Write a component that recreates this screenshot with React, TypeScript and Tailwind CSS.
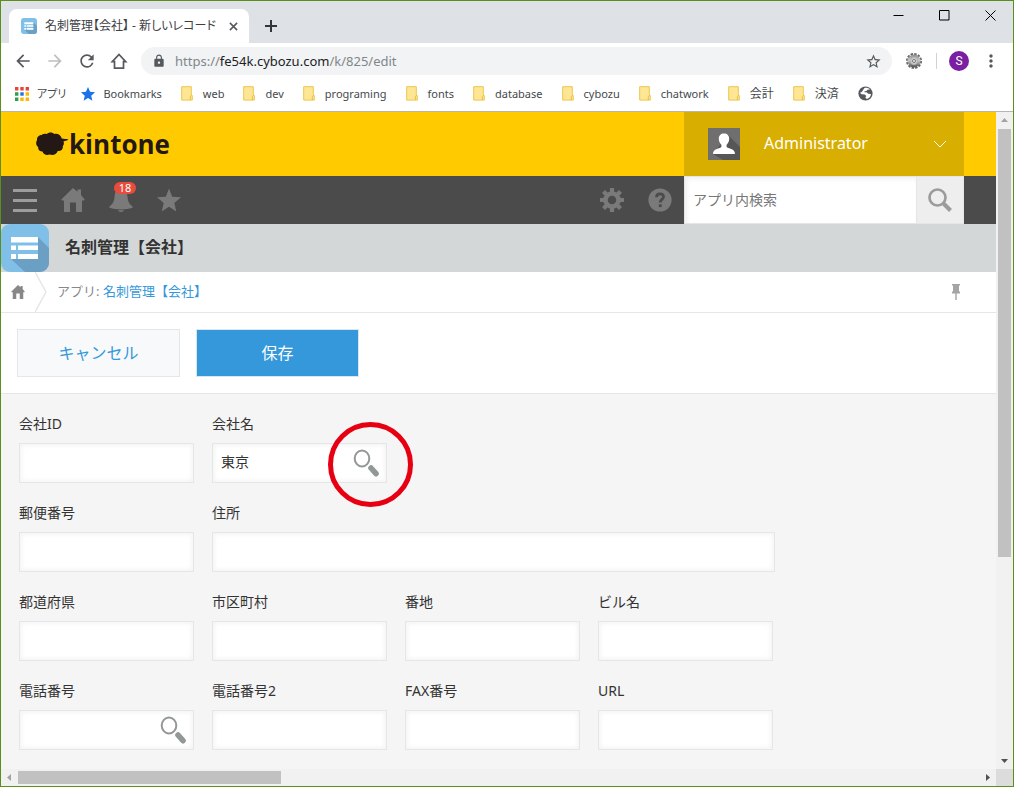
import React from 'react';
import { MdArrowBack, MdArrowForward, MdLock, MdMoreVert, MdRefresh, MdStarBorder } from 'react-icons/md';

const bookmarks = ['web', 'dev', 'programing', 'fonts', 'database', 'cybozu', 'chatwork'];
const japaneseBookmarks = ['会計', '決済'];

type Field = { id: string; label: string; value?: string; lookup?: boolean; wide?: boolean; marked?: boolean };

const rows: Field[][] = [
  [
    { id: 'company-id', label: '会社ID' },
    { id: 'company-name', label: '会社名', value: '東京', lookup: true, marked: true },
  ],
  [
    { id: 'zip', label: '郵便番号' },
    { id: 'address', label: '住所', wide: true },
  ],
  [
    { id: 'prefecture', label: '都道府県' },
    { id: 'city', label: '市区町村' },
    { id: 'street', label: '番地' },
    { id: 'building', label: 'ビル名' },
  ],
  [
    { id: 'tel', label: '電話番号', lookup: true },
    { id: 'tel2', label: '電話番号2' },
    { id: 'fax', label: 'FAX番号' },
    { id: 'url', label: 'URL' },
  ],
];

function AppIcon({ className }: { className: string }) {
  return (
    <svg viewBox="0 0 48 48" className={className} aria-hidden="true">
      <rect width="48" height="48" rx="9" fill="#7fbfe8" />
      <path d="M37 13 48 24v15a9 9 0 0 1-9 9H24L10 35h27z" fill="#6c9fc4" />
      <path d="M10 13h27v5.500H10zM10 21.500h5V26h-5zM17 21.500h20V26H17zM10 30h5v5h-5zM17 30h20v5H17z" fill="#fff" />
    </svg>
  );
}

function Folder() {
  return (
    <svg viewBox="0 0 12 15" className="h-[15px] w-3 shrink-0" aria-hidden="true">
      <path d="M.7.700h9.600V9.500h1v4.600H.7z" fill="#ffe694" stroke="#ecc64f" />
      <path d="M9.300 14v-3.200l1-1.300" fill="none" stroke="#e8be3c" />
    </svg>
  );
}

function House({ className }: { className: string }) {
  return (
    <svg viewBox="0 0 24 24" className={className} fill="currentColor" aria-hidden="true">
      <path d="M12 0 .300 11.500 1 12.500h2V24h6v-9.500h6V24h6V12.500h2l.700-1L20 7V1.500h-3.500v2.300z" />
    </svg>
  );
}

function Lookup() {
  return (
    <svg viewBox="0 0 26 28" className="h-7 w-[26px]" aria-hidden="true">
      <ellipse cx="9" cy="9.500" rx="7.300" ry="8" fill="#fff" stroke="#929896" strokeWidth="2" />
      <path d="m18 19 5 5.700" stroke="#929896" strokeWidth="5.600" strokeLinecap="round" />
    </svg>
  );
}

function Browser() {
  return (
    <header className="bg-white font-['Noto_Sans','Noto_Sans_CJK_JP',sans-serif]">
      <div className="flex h-[42px] bg-[#dee1e6] pl-2">
        <div className="mt-2 flex w-60 items-center rounded-t-lg bg-white pl-3 pr-2">
          <AppIcon className="size-4 shrink-0" />
          <span className="ml-2 flex-1 whitespace-nowrap text-[12px] leading-4 text-[#3c4043] [font-feature-settings:'palt']">
            名刺管理【会社】 - 新しいレコード
          </span>
          <button aria-label="タブを閉じる" className="flex size-4 items-center justify-center">
            <svg viewBox="0 0 10 10" className="size-[9px]" stroke="#55585c" strokeWidth="1.700">
              <path d="m1 1 8 8M9 1 1 9" />
            </svg>
          </button>
        </div>
        <button aria-label="新しいタブ" className="ml-4 mt-[19px] size-3">
          <svg viewBox="0 0 12 12" className="size-3" stroke="#333639" strokeWidth="2">
            <path d="M6 0v12M0 6h12" />
          </svg>
        </button>
        <div className="ml-auto flex h-7">
          <button aria-label="最小化" className="flex w-[46px] items-center justify-center">
            <svg viewBox="0 0 11 11" className="size-[11px]" fill="none" stroke="#000"><path d="M.500 5.500h10" /></svg>
          </button>
          <button aria-label="最大化" className="flex w-[46px] items-center justify-center">
            <svg viewBox="0 0 11 11" className="size-[11px]" fill="none" stroke="#000"><path d="M.500.500h9.500v9.500H.500z" /></svg>
          </button>
          <button aria-label="閉じる" className="flex w-[46px] items-center justify-center">
            <svg viewBox="0 0 11 11" className="size-[11px]" fill="none" stroke="#000"><path d="m.500.500 10 10M10.500.500l-10 10" /></svg>
          </button>
        </div>
      </div>
      <div className="flex h-9 items-center pl-3 pr-3 text-[#55585c]">
        <div className="flex gap-3">
          <button aria-label="戻る"><MdArrowBack size={20} /></button>
          <button aria-label="進む" className="text-[#bcbec0]"><MdArrowForward size={20} /></button>
          <button aria-label="再読み込み"><MdRefresh size={20} /></button>
          <button aria-label="ホーム">
            <svg viewBox="0 0 20 20" className="size-5" fill="none" stroke="currentColor" strokeWidth="1.700">
              <path d="M3.300 10.700 10 3.500l6.700 7.200h-2.200v6.500h-9v-6.500z" />
            </svg>
          </button>
        </div>
        <div className="ml-3 flex h-7 flex-1 items-center rounded-full bg-[#f1f3f4] pl-[11px] pr-[10px]">
          <MdLock size={14} />
          <div
            role="textbox"
            aria-label="アドレス"
            contentEditable
            suppressContentEditableWarning
            className="ml-[9px] flex-1 whitespace-nowrap text-[13px] leading-5 text-[#80868b] outline-none"
          >
            https://<span className="text-[#202124]">fe54k.cybozu.com</span>/k/825/edit
          </div>
          <button aria-label="ブックマークに追加"><MdStarBorder size={17} /></button>
        </div>
        <button aria-label="拡張機能" className="ml-[14px]">
          <svg viewBox="0 0 16 16" className="size-4">
            <defs>
              <linearGradient id="metal" x1="0" y1="0" x2="0" y2="1">
                <stop offset="0" stopColor="#8a8a8a" />
                <stop offset=".45" stopColor="#c9c9c9" />
                <stop offset="1" stopColor="#4d4d4d" />
              </linearGradient>
            </defs>
            <circle cx="8" cy="8" r="7" fill="none" stroke="#666" strokeWidth="2" strokeDasharray="2.400 1.265" />
            <circle cx="8" cy="8" r="6.500" fill="url(#metal)" />
            <circle cx="8" cy="8" r="3.500" fill="#cfcfcf" stroke="#b5b5b5" />
            <circle cx="8" cy="8" r="1.500" fill="#f5f5f5" stroke="#777" />
          </svg>
        </button>
        <span className="ml-[14px] h-4 w-px bg-[#d0d2d5]" />
        <button aria-label="プロフィール" className="ml-3 size-5 rounded-full bg-[#7b1fa2] text-center font-['Roboto',sans-serif] text-[12px] leading-5 text-white">S</button>
        <button aria-label="メニュー" className="ml-3"><MdMoreVert size={20} /></button>
      </div>
      <nav className="flex h-8 items-center gap-[19px] whitespace-nowrap pb-[3px] pl-[14px] text-[11px] leading-4 text-[#45494d]">
        <a href="#apps" className="flex items-center gap-2 [font-feature-settings:'palt']">
          <svg viewBox="0 0 14 14" className="size-[14px]">
            <path d="M0 0h3.400v3.400H0zM5.300 0h3.400v3.400H5.300zM10.600 0H14v3.400h-3.400z" fill="#ea4335" />
            <path d="M0 5.300h3.400v3.400H0zM0 10.600h3.400V14H0z" fill="#2f9e4f" />
            <path d="M5.300 5.300h3.400v3.400H5.300z" fill="#1a73e8" />
            <path d="M10.600 5.300H14v3.400h-3.400zM5.300 10.600h3.400V14H5.300zM10.600 10.600H14V14h-3.400z" fill="#fbb904" />
          </svg>
          アプリ
        </a>
        <a href="#bookmarks" className="-ml-1 flex items-center gap-2">
          <svg viewBox="0 0 24 24" className="size-[14px]" fill="#1a73e8">
            <path d="m12 0 3.500 8.300 8.500.700-6.500 6 2 8.500L12 19l-7.500 4.500 2-8.500L0 9l8.500-.700z" />
          </svg>
          Bookmarks
        </a>
        {bookmarks.map((name) => (
          <a key={name} href={`#${name}`} className="flex items-center gap-[10px]">
            <Folder />
            {name}
          </a>
        ))}
        {japaneseBookmarks.map((name) => (
          <a key={name} href={`#${name}`} className="flex items-center gap-[10px] text-[12px]">
            <Folder />
            {name}
          </a>
        ))}
        <a href="#globe" aria-label="サイト">
          <svg viewBox="0 0 15 15" className="size-[15px]">
            <circle cx="7.500" cy="7.500" r="7.100" fill="#55585c" />
            <path d="M6.200 2.200c1.600-.700 4.400-.300 5.700 1.200l-2.500.300-.900 1.300-1.900.200-.200 1 2.200.100 1.700 1.500 2.700.200c-.100 2.400-1.800 4.400-4.200 5L7.300 11.500l1-1.400-1.600-1.600-3-.200-1.900-1.600c1.600-.200 2.500-1 3-2.200z" fill="#fff" />
          </svg>
        </a>
      </nav>
    </header>
  );
}

function Account() {
  return (
    <button className="mr-8 flex w-[280px] items-center bg-[#d8ae00] pl-6 pr-4 text-white">
      <svg viewBox="0 0 32 32" className="size-8" aria-hidden="true">
        <path d="M0 0h32v32H0z" fill="#6f6f6f" />
        <path d="M20 7 32 19v13H15L5 26z" fill="#565656" />
        <path d="M16 5.500c3.200 0 5.200 2 5.200 5.200 0 2.600-1 4.300-2.200 5.600-.700.800-.700 2.700.200 3.300 3.300 1.400 7.800 2 7.800 6.400H5c0-4.400 4.500-5 7.800-6.400.900-.600.900-2.500.200-3.300-1.200-1.300-2.200-3-2.200-5.600 0-3.200 2-5.200 5.200-5.200z" fill="#fff" />
      </svg>
      <span className="ml-6 pb-0.5 text-[16px] leading-6">Administrator</span>
      <svg viewBox="0 0 14 8" className="ml-auto mr-px h-2 w-[14px]" fill="none" stroke="#fff" aria-hidden="true">
        <path d="m1 1 6 6 6-6" />
      </svg>
    </button>
  );
}

function GlobalNav() {
  return (
    <nav className="flex h-12 items-center bg-[#4b4b4b] pl-3 text-[#7a7a7a]">
      <div className="flex items-center gap-6">
        <button aria-label="メニュー">
          <svg viewBox="0 0 24 24" className="size-6" fill="#9d9d9d"><path d="M0 1h24v3H0zM0 11h24v3H0zM0 21h24v3H0z" /></svg>
        </button>
        <button aria-label="ポータル"><House className="size-6" /></button>
        <button aria-label="通知 18" className="relative">
          <svg viewBox="0 0 24 24" className="size-6" fill="currentColor">
            <path d="M12 0c4 0 5.800 3 6.300 7.500.6 6 1.700 8.500 5.200 11 .5.600.3 1-.3 1.300-5.500 2.200-16.900 2.200-22.400 0-.6-.3-.8-.7-.3-1.300C4 16 5.100 13.500 5.700 7.500 6.200 3 8 0 12 0zM9 22.300h6c-.600 2.200-5.400 2.200-6 0z" />
          </svg>
          <span className="absolute -top-[6px] left-[5px] h-3 w-[22px] rounded-full bg-[#e74c3c] text-[11px] leading-3 text-white">18</span>
        </button>
        <button aria-label="ブックマーク">
          <svg viewBox="0 0 24 24" className="size-6" fill="currentColor">
            <path d="m12 .500 3.200 8.300 8.800.500-6.700 5.600 2 8.700L12 18.700l-7.300 4.900 2-8.700L0 9.300l8.800-.500z" />
          </svg>
        </button>
      </div>
      <div className="ml-auto flex items-center gap-6 pr-3">
        <button aria-label="設定">
          <svg viewBox="0 0 24 24" className="size-6" fill="none" stroke="currentColor">
            <circle cx="12" cy="12" r="6.500" strokeWidth="4.500" />
            <path d="M12 0v4M12 20v4M0 12h4M20 12h4M3.500 3.500l3 3M17.500 17.500l3 3M3.500 20.500l3-3M17.500 6.500l3-3" strokeWidth="4.200" />
          </svg>
        </button>
        <button aria-label="ヘルプ">
          <svg viewBox="0 0 24 24" className="size-6">
            <circle cx="12" cy="12" r="11.600" fill="currentColor" />
            <path d="M8.500 9.300C8.600 4.500 15.800 5 15.500 9c-.200 2.500-3.300 2.400-3.300 5.500" fill="none" stroke="#4b4b4b" strokeWidth="2.800" />
            <path d="M10.800 16.300h2.900v2.800h-2.900z" fill="#4b4b4b" />
          </svg>
        </button>
      </div>
      <form className="mr-8 flex h-12 w-[280px] border border-[#e3e7e8] bg-white" onSubmit={(e) => e.preventDefault()}>
        <input aria-label="アプリ内検索" placeholder="アプリ内検索" className="min-w-0 flex-1 px-2 pb-0.5 text-[14px] shadow-[inset_2px_2px_4px_#f0f0f0] outline-none placeholder:text-[#777]" />
        <button aria-label="検索" className="flex w-[47px] items-center justify-center border-l border-[#e3e7e8] bg-[#eee]">
          <svg viewBox="0 0 24 24" className="size-6" fill="none" stroke="#9b9b9b">
            <circle cx="9.500" cy="9.500" r="8" strokeWidth="2.700" />
            <path d="m15.500 15.500 7 7" strokeWidth="4" />
          </svg>
        </button>
      </form>
    </nav>
  );
}

function FieldBox({ field }: { field: Field }) {
  return (
    <div className={field.wide ? 'w-[563px]' : 'w-[175px]'}>
      <label htmlFor={field.id} className="block text-[14px] leading-5">{field.label}</label>
      <div className="relative mt-[9px]">
        <input
          id={field.id}
          defaultValue={field.value}
          className="block h-10 w-full border border-[#e3e7e8] bg-white px-2 pb-1 text-[14px] shadow-[inset_2px_2px_4px_#f5f5f5,inset_-2px_-2px_4px_#f5f5f5] outline-none"
        />
        {field.lookup && (
          <button aria-label={`${field.label}を検索`} className="absolute right-2 top-[6px]"><Lookup /></button>
        )}
        {field.marked && (
          <span className="pointer-events-none absolute -top-[21px] left-[116px] size-[85px] rounded-full border-[5px] border-[#e60012]" />
        )}
      </div>
    </div>
  );
}

function Arrow({ className }: { className: string }) {
  return (
    <svg viewBox="0 0 17 17" className={`size-[17px] shrink-0 ${className}`} fill="currentColor" aria-hidden="true">
      <path d="m5 10 3.500-4 3.500 4z" />
    </svg>
  );
}

export default function App() {
  return (
    <div className="flex min-h-screen flex-col border border-[#5a8f1c] bg-white font-['Noto_Sans','Noto_Sans_CJK_JP',sans-serif] text-[#333]">
      <Browser />
      <div className="flex flex-1 border-t border-[#b6b4b6]">
        <main className="flex min-w-0 flex-1 flex-col">
          <div className="flex h-16 justify-between bg-[#ffcb00]">
            <a href="#kintone" className="ml-[35px] flex items-center text-[#231815]">
              <svg viewBox="0 0 33 24" className="h-6 w-[33px]" fill="currentColor" aria-hidden="true">
                <path d="M5.500 3C7 1.800 9 1.500 10.500 2c2-2 6-2.300 8 0 3-.700 6.500.800 7.200 4.500 2.300.500 4.500.300 6.800 1-1.500 1-3.500 1.500-5 2 .8 2 .3 3.500-.7 4.500.7 3.200-1.800 5.500-5 5-1.300 3.500-5 4.700-8 3.500-3 1.200-6.500.2-7.300-3-3 0-4.700-2-4.300-4.500C-.3 13.500-.3 10 1 8c-.3-2.500 1.700-5 4.500-5z" />
              </svg>
              <span className="font-['Open_Sans',sans-serif] text-[26px] font-bold leading-8">kintone</span>
            </a>
            <Account />
          </div>
          <GlobalNav />
          <div className="flex h-12 items-center bg-[#d4d7d7]">
            <AppIcon className="size-12" />
            <h1 className="ml-4 pb-0.5 text-[16px] font-bold leading-6">名刺管理【会社】</h1>
          </div>
          <div className="flex h-[41px] items-center border-b border-[#e3e7e8] text-[13px] leading-5 text-[#888]">
            <a href="#home" aria-label="ホーム" className="ml-[10px] text-[#888]"><House className="size-[14px]" /></a>
            <svg viewBox="0 0 12 40" className="ml-[10px] h-10 w-3" fill="none" stroke="#e3e7e8" strokeWidth="1.500" aria-hidden="true">
              <path d="m0 0 11 20L0 40" />
            </svg>
            <span className="ml-[10px] pb-0.5">アプリ: <a href="#app" className="text-[#3498db]">名刺管理【会社】</a></span>
            <button aria-label="固定" className="ml-auto mr-9">
              <svg viewBox="0 0 8 16" className="h-4 w-2" fill="#a5a5a5">
                <path d="M0 0h8v1.500H7V7l1 1v1.500H4.700V16H3.300V9.500H0V8l1-1V1.500H0z" />
              </svg>
            </button>
          </div>
          <div className="flex gap-4 border-b border-[#e3e7e8] p-4 text-[16px]">
            <button className="h-12 w-[163px] border border-[#e3e7e8] bg-[#f7f9fa] text-[#3498db]">キャンセル</button>
            <button className="h-12 w-[163px] border border-[#d9e6ee] bg-[#3498db] text-white">保存</button>
          </div>
          <form className="flex flex-1 flex-col gap-5 bg-[#f5f5f5] px-[18px] pb-[19px] pt-5" onSubmit={(e) => e.preventDefault()}>
            {rows.map((row) => (
              <div key={row[0].id} className="flex gap-[18px]">
                {row.map((field) => <FieldBox key={field.id} field={field} />)}
              </div>
            ))}
          </form>
        </main>
        <div className="flex w-[17px] flex-col bg-[#f1f1f1]">
          <Arrow className="text-[#a3a3a3]" />
          <div className="flex flex-1 justify-center"><span className="h-[68.7%] w-[13px] bg-[#c1c1c1]" /></div>
          <Arrow className="rotate-180 text-[#505050]" />
        </div>
      </div>
      <div className="flex h-[17px] items-center bg-[#f1f1f1]">
        <Arrow className="-rotate-90 text-[#a3a3a3]" />
        <div className="flex flex-1"><span className="h-[13px] w-[27.4%] bg-[#c1c1c1]" /></div>
        <Arrow className="rotate-90 text-[#505050]" />
        <span className="size-[17px] bg-[#dcdcdc]" />
      </div>
    </div>
  );
}
